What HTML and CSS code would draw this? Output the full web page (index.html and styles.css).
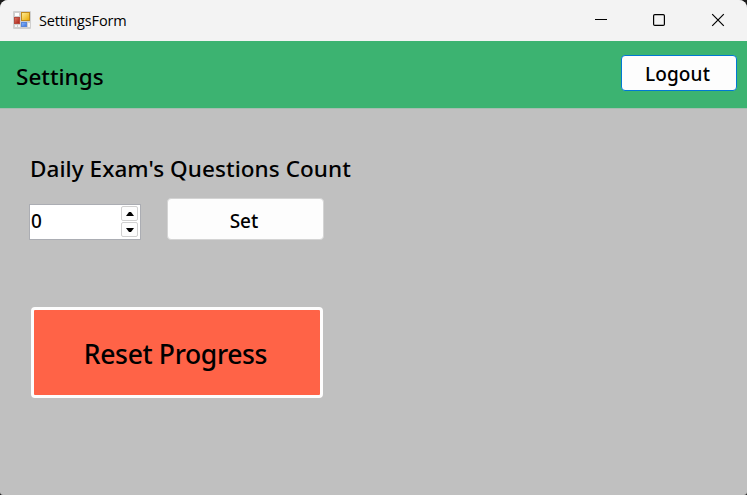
FILE: index.html
```html
<!DOCTYPE html>
<html lang="en">
<head>
<meta charset="utf-8">
<title>SettingsForm</title>
<link rel="stylesheet" href="styles.css">
</head>
<body>
<div class="window">
  <header class="titlebar">
    <svg class="app-icon" width="18" height="18" viewBox="0 0 18 18">
      <defs>
        <linearGradient id="gold" x2="1" y2="1"><stop offset="0" stop-color="#ffef9c"/><stop offset="1" stop-color="#e9a800"/></linearGradient>
        <linearGradient id="red" x2="1" y2="1"><stop offset="0" stop-color="#e07a68"/><stop offset="1" stop-color="#a81c10"/></linearGradient>
        <linearGradient id="blue" x2="1" y2="1"><stop offset="0" stop-color="#8ebcff"/><stop offset="1" stop-color="#3a72dc"/></linearGradient>
      </defs>
      <rect width="18" height="18" rx="1" fill="#cfcfcf"/>
      <rect x="2" y="2" width="4" height="3" fill="#fff"/>
      <rect x="2" y="14" width="2" height="2" fill="#f4f4f4"/>
      <rect x="5" y="14" width="2" height="2" fill="#f4f4f4"/>
      <rect x="15" y="12" width="2" height="4" fill="#f4f4f4"/>
      <rect x="8.500" y="1.500" width="8" height="8" fill="url(#gold)" stroke="#c08a1c"/>
      <rect x="1.500" y="6.500" width="5" height="6" fill="url(#red)" stroke="#b54a3e"/>
      <rect x="8.500" y="11.500" width="5" height="4" fill="url(#blue)" stroke="#5a86d8"/>
    </svg>
    <span class="title">SettingsForm</span>
    <svg class="controls" width="131" height="14" viewBox="0 0 131 14" fill="none" stroke="#000" stroke-width="1.200">
      <path d="M0 6.500h12" stroke-width="1"/>
      <rect x="58.600" y="1.600" width="10.800" height="10.800" rx="1.200"/>
      <path d="M117.200 1.200l11.600 11.600M128.800 1.200l-11.600 11.600"/>
    </svg>
  </header>
  <div class="banner">
    <h1 class="heading">Settings</h1>
    <button class="button logout">Logout</button>
  </div>
  <main class="content">
    <div class="label">Daily Exam's Questions Count</div>
    <div class="row">
      <div class="number">
        <span class="value">0</span>
        <div class="spinner">
          <span class="step"><svg width="8" height="4" viewBox="0 0 8 4"><path d="M0 4L3 0h2l3 4z"/></svg></span>
          <span class="step"><svg width="8" height="4" viewBox="0 0 8 4"><path d="M0 0h8L5 4H3z"/></svg></span>
        </div>
      </div>
      <button class="button set">Set</button>
    </div>
    <button class="reset">Reset Progress</button>
  </main>
</div>
</body>
</html>
```

FILE: styles.css
```css
* { box-sizing: border-box; }

body {
  margin: 0;
  background: #1b1b1b;
  color: #000;
  font-family: "Noto Sans", "Open Sans", sans-serif;
  font-weight: 500;
}

.window {
  display: flex;
  flex-direction: column;
  height: 495px;
  overflow: hidden;
  border-radius: 8px 8px 3px 3px;
  background: #c0c0c0;
}

.titlebar {
  display: flex;
  align-items: center;
  height: 41px;
  padding: 0 21px 0 13px;
  background: #f3f3f3;
}

.app-icon { margin-top: -1px; }

.title {
  margin-left: 8px;
  font-family: "Open Sans", sans-serif;
  font-size: 14.5px;
  font-weight: 400;
  line-height: 20px;
  letter-spacing: -0.15px;
}

.controls {
  margin-top: -1px;
  margin-left: auto;
}

.banner {
  display: flex;
  align-items: flex-start;
  justify-content: space-between;
  height: 67px;
  padding: 14px 10px 0 16px;
  background: #3cb371;
}

.heading {
  margin: 7px 0 0;
  font-size: 22.5px;
  font-weight: 500;
  line-height: 30px;
}

button {
  margin: 0;
  padding: 0;
  color: #000;
  font-family: inherit;
  font-weight: 500;
}

.button {
  border: 1px solid #d4d4d4;
  border-radius: 4px;
  background: #fdfdfd;
  font-size: 19px;
}

.logout {
  width: 116px;
  height: 36px;
  padding: 2px 3px 0 0;
  border-color: #0078d4;
  letter-spacing: 0.15px;
}

.content {
  flex: 1;
  padding: 45px 30px 0;
  border-top: 1px solid #a5bdb0;
}

.label {
  font-size: 22.5px;
  line-height: 30px;
  letter-spacing: 0.06px;
  white-space: nowrap;
}

.row {
  display: flex;
  align-items: flex-start;
  margin-top: 14px;
}

.number {
  display: flex;
  justify-content: space-between;
  width: 112px;
  height: 36px;
  margin: 6px 26px 0 -1px;
  padding: 1px 2px 1px 1px;
  border: 1px solid #abadb3;
  background: #fff;
}

.value {
  font-size: 19px;
  line-height: 31px;
}

.spinner {
  display: flex;
  flex-direction: column;
  gap: 1px;
  width: 17px;
}

.step {
  display: flex;
  align-items: center;
  justify-content: center;
  height: 15px;
  border: 1px solid #d0d0d0;
  border-radius: 2px;
  background: #fdfdfd;
}

.set {
  width: 157px;
  height: 42px;
  padding: 3px 3px 0 0;
}

.reset {
  display: block;
  width: 292px;
  height: 91px;
  margin: 67px 0 0 1px;
  padding: 2px 3px 0 0;
  border: 3px solid #fdfdfd;
  border-radius: 4px;
  background: #ff6347;
  font-size: 26.5px;
  letter-spacing: -0.35px;
}
```
